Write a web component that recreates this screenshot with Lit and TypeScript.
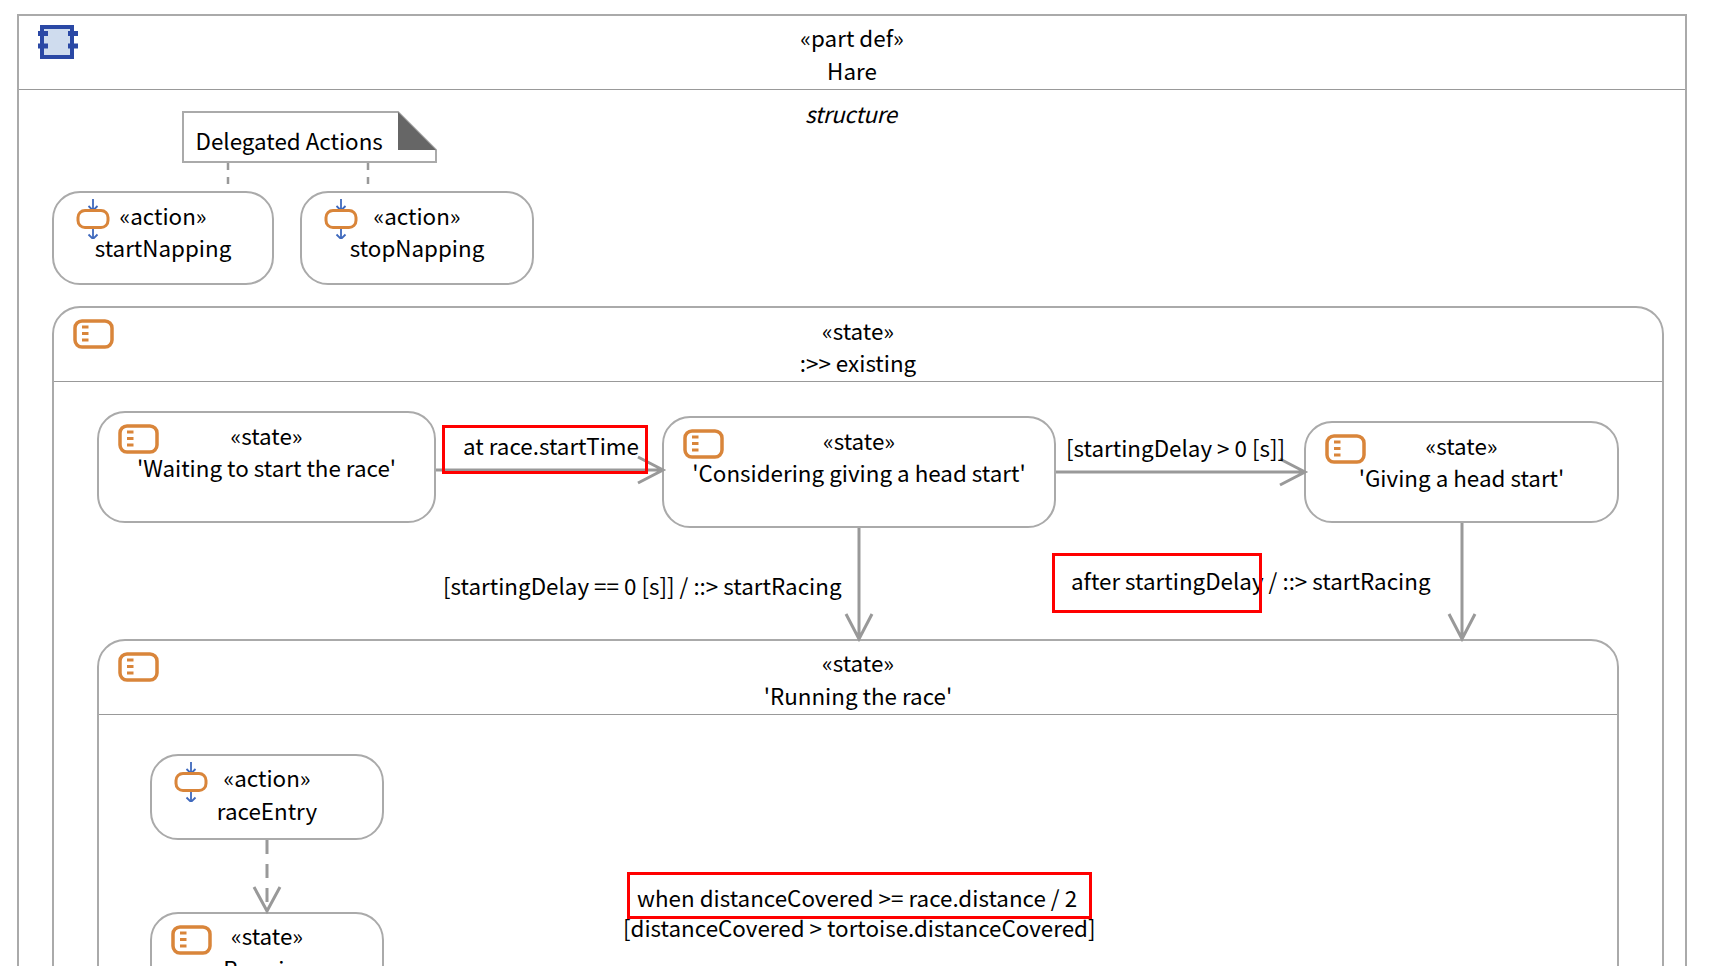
import { LitElement, html, css, svg } from "lit";
import { customElement } from "lit/decorators.js";

type Node = { x: number; y: number; w: number; h: number; l1: string; l2: string; icon?: "state" | "action" | "part"; comp?: boolean; cls?: string; wide?: boolean };

const NODES: Node[] = [
  { x: 17, y: 14, w: 1670, h: 1200, l1: "«part def»", l2: "Hare", icon: "part", comp: true, cls: "frame", wide: true },
  { x: 52, y: 191, w: 222, h: 94, l1: "«action»", l2: "startNapping", icon: "action" },
  { x: 300, y: 191, w: 234, h: 94, l1: "«action»", l2: "stopNapping", icon: "action" },
  { x: 52, y: 306, w: 1612, h: 900, l1: "«state»", l2: ":>> existing", icon: "state", comp: true },
  { x: 97, y: 411, w: 339, h: 112, l1: "«state»", l2: "'Waiting to start the race'", icon: "state" },
  { x: 662, y: 416, w: 394, h: 112, l1: "«state»", l2: "'Considering giving a head start'", icon: "state" },
  { x: 1304, y: 421, w: 315, h: 102, l1: "«state»", l2: "'Giving a head start'", icon: "state" },
  { x: 97, y: 639, w: 1522, h: 500, l1: "«state»", l2: "'Running the race'", icon: "state", comp: true, wide: true },
  { x: 150, y: 754, w: 234, h: 86, l1: "«action»", l2: "raceEntry", icon: "action", wide: true },
  { x: 150, y: 912, w: 234, h: 120, l1: "«state»", l2: "Running", icon: "state", wide: true },
];

const LABELS: { x: number; cy: number; t: string; i?: boolean }[] = [
  { x: 805, cy: 113, t: "structure", i: true },
  { x: 195.500, cy: 140, t: "Delegated Actions" },
  { x: 463, cy: 445, t: "at race.startTime" },
  { x: 1066, cy: 447, t: "[startingDelay > 0 [s]]" },
  { x: 443, cy: 585, t: "[startingDelay == 0 [s]] / ::> startRacing" },
  { x: 1071, cy: 580, t: "after startingDelay / ::> startRacing" },
  { x: 637, cy: 897, t: "when distanceCovered >= race.distance / 2" },
  { x: 623, cy: 927, t: "[distanceCovered > tortoise.distanceCovered]" },
];

const RED = [
  [442, 425, 206, 49],
  [1052, 553, 210, 60],
  [627, 872, 465, 47],
];

const partIcon = svg`<svg class="ic part" width="44" height="38" viewBox="0 0 44 38">
  <rect x="6" y="4" width="30" height="30" fill="#cfdcee" stroke="#2a48a5" stroke-width="4"/>
  <path d="M2 10.500H12M2 23H12M32 10.500H42M32 23H42" stroke="#2a48a5" stroke-width="5" fill="none"/>
</svg>`;

const stateIcon = svg`<svg class="ic state" width="41" height="30" viewBox="0 0 41 30">
  <rect x="2" y="2" width="37" height="26" rx="7" fill="#fff" stroke="#d9853a" stroke-width="3.500"/>
  <path d="M9 8H15.500M9 14.500H15.500M9 21H15.500" stroke="#d9853a" stroke-width="3" fill="none"/>
</svg>`;

const actionIcon = svg`<svg class="ic action" width="34" height="40" viewBox="0 0 34 40">
  <path d="M17 0V11M12.500 7L17 11.500L21.500 7M17 30V40M12.500 35.500L17 40L21.500 35.500" stroke="#3f69bd" stroke-width="1.800" fill="none"/>
  <rect x="2" y="11.500" width="30" height="17" rx="7" fill="#fff" stroke="#d9853a" stroke-width="3"/>
</svg>`;

@customElement("app-root")
export class AppRoot extends LitElement {
  static styles = css`
    :host { display: block; width: 1720px; height: 966px; overflow: hidden; background: #fff; }
    .canvas {
      position: relative; width: 1720px; height: 966px; overflow: hidden;
      font-family: "Noto Sans CJK JP", "Noto Sans", sans-serif; font-size: 22.400px; line-height: 33px; color: #000;
    }
    .node {
      position: absolute; box-sizing: border-box; background: #fff; border: 2px solid #aaa; border-radius: 28px;
      display: flex; flex-direction: column;
    }
    .node.comp { border-radius: 28px 28px 0 0; }
    .node.frame.comp { border-radius: 0; }
    .head {
      flex: none; box-sizing: border-box; padding: 5.500px 0 0; text-align: center; height: 74px; white-space: nowrap; line-height: 32px;
    }
    .wide > .head { padding-top: 5px; line-height: 33px; }
    .comp > .head { border-bottom: 1.500px solid #999; }
    .ic { position: absolute; display: block; }
    .ic.part { left: 17px; top: 7px; }
    .ic.state { left: 18.500px; top: 11px; }
    .ic.action { left: 22px; top: 6px; }
    svg.wires { position: absolute; left: 0; top: 0; pointer-events: none; }
    .wire { fill: none; stroke: #999; stroke-width: 3; }
    .note { fill: #fff; stroke: #aaa; stroke-width: 2; }
    .fold { fill: #666; }
    .lbl { position: absolute; white-space: nowrap; height: 33px; }
    .lbl.i { font-style: italic; letter-spacing: -0.350px; }
    .red { position: absolute; box-sizing: border-box; border: 3px solid #f00; }
  `;

  private icon(n: Node) {
    return n.icon === "part" ? partIcon : n.icon === "action" ? actionIcon : stateIcon;
  }

  render() {
    return html`<div class="canvas">
      ${NODES.map(
        (n) => html`<div
          class="node ${n.comp ? "comp" : ""} ${n.wide ? "wide" : ""} ${n.cls ?? ""}"
          style="left:${n.x}px;top:${n.y}px;width:${n.w}px;height:${n.h}px"
        >
          ${this.icon(n)}
          <div class="head"><div>${n.l1}</div><div>${n.l2}</div></div>
        </div>`
      )}
      <svg class="wires" width="1720" height="966" viewBox="0 0 1720 966">
        <polygon class="note" points="183,112 398,112 436,150 436,162 183,162" />
        <polygon class="fold" points="398,112 436,150 398,150" />
        <path d="M228 163V184M368 163V184" class="wire" stroke-dasharray="7 7" style="stroke-width:2.500" />
        <path class="wire" d="M436 470H661M638 457L663 470L638 483" />
        <path class="wire" d="M1056 472H1303M1280 459L1305 472L1280 485" />
        <path class="wire" d="M859 528V637M846 614L859 639L872 614" />
        <path class="wire" d="M1462 523V637M1449 614L1462 639L1475 614" />
        <path class="wire" d="M267 840V908" stroke-dasharray="14 10" />
        <path class="wire" d="M254 887L267 911L280 887" />
      </svg>
      ${LABELS.map(
        (l) => html`<div class="lbl ${l.i ? "i" : ""}" style="left:${l.x}px;top:${l.cy - 16.5}px">${l.t}</div>`
      )}
      ${RED.map(
        (r) => html`<div class="red" style="left:${r[0]}px;top:${r[1]}px;width:${r[2]}px;height:${r[3]}px"></div>`
      )}
    </div>`;
  }
}
